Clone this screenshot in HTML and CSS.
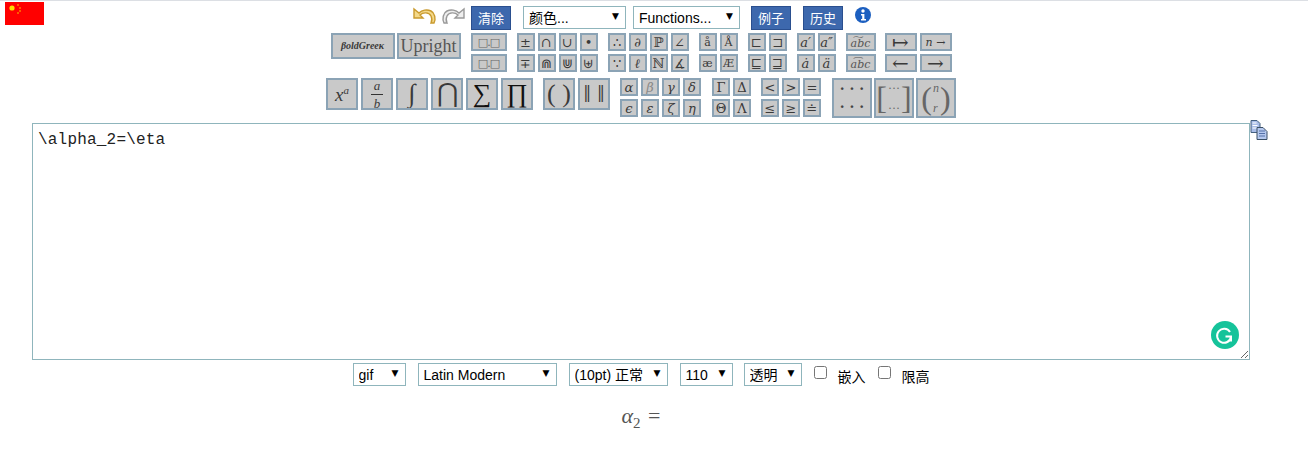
FILE: index.html
```html
<!DOCTYPE html>
<html lang="en">
<head>
    <meta charset="UTF-8">
    <title>Equation Editor</title>
    <link rel="stylesheet" href="styles.css">
</head>
<body>
<div class="page">
    <!-- top bar -->
    <div class="topbar">
        <svg class="flag" viewBox="0 0 39 23">
            <rect width="39" height="23" fill="#f00"/>
            <circle cx="7" cy="6" r="2.6" fill="#fd0"/>
            <circle cx="13" cy="3" r="0.8" fill="#fc0"/>
            <circle cx="15" cy="6" r="0.8" fill="#fc0"/>
            <circle cx="15" cy="9" r="0.8" fill="#fc0"/>
            <circle cx="13" cy="11" r="0.8" fill="#fc0"/>
        </svg>
        <div class="tools">
            <svg class="hist undo" viewBox="0 0 26 18">
                <path d="M3 2v9h9L9 8c3-3 9-3 11 1 1 2 1 5 0 7h3c2-4 1-10-3-12-4-2-9-1-12 2z" fill="#f4d98a" stroke="#c99a2e" stroke-width="1.4"/>
            </svg>
            <svg class="hist redo" viewBox="0 0 26 18">
                <path d="M23 2v9h-9l3-3c-3-3-9-3-11 1-1 2-1 5 0 7H3C1 12 2 6 6 4c4-2 9-1 12 2z" fill="#eee" stroke="#999" stroke-width="1.4"/>
            </svg>
            <button class="blue-btn clear">清除</button>
            <span class="pick pick-color"><select><option>颜色...</option></select></span>
            <span class="pick pick-func"><select><option>Functions...</option></select></span>
            <button class="blue-btn examples">例子</button>
            <button class="blue-btn history">历史</button>
            <svg class="info" viewBox="0 0 16 16">
                <circle cx="8" cy="8" r="8" fill="#1c5fc0"/>
                <circle cx="8" cy="4" r="1.7" fill="#fff"/>
                <path d="M6 7h3.4v5H11v1.6H6V12h1.2V8.6H6z" fill="#fff"/>
            </svg>
        </div>
    </div>

    <!-- symbol panels, first row -->
    <div class="panel row-a">
        <div class="grp wide">
            <span class="sym bold-greek">βoldGreeκ</span>
            <span class="sym upright">Upright</span>
        </div>
        <div class="grp box">
            <span class="sym boxes">□.□</span>
            <span class="sym boxes">□.□</span>
        </div>
        <div class="grp c4">
            <span class="sym">±</span><span class="sym">∩</span><span class="sym">∪</span><span class="sym">•</span>
            <span class="sym">∓</span><span class="sym">⋒</span><span class="sym">⋓</span><span class="sym">⊎</span>
        </div>
        <div class="grp c4">
            <span class="sym">∴</span><span class="sym it">∂</span><span class="sym">ℙ</span><span class="sym">∠</span>
            <span class="sym">∵</span><span class="sym it">ℓ</span><span class="sym">ℕ</span><span class="sym">∡</span>
        </div>
        <div class="grp c2">
            <span class="sym sm">å</span><span class="sym sm">Å</span>
            <span class="sym sm">æ</span><span class="sym sm">Æ</span>
        </div>
        <div class="grp c2">
            <span class="sym">⊏</span><span class="sym">⊐</span>
            <span class="sym">⊑</span><span class="sym">⊒</span>
        </div>
        <div class="grp c2">
            <span class="sym it">a′</span><span class="sym it">a″</span>
            <span class="sym it">ȧ</span><span class="sym it">ä</span>
        </div>
        <div class="grp box-abc">
            <span class="sym it sm abc">a͠bc</span>
            <span class="sym it sm abc">a͡bc</span>
        </div>
        <div class="grp arrows">
            <span class="sym lg">↦</span><span class="sym it sm">n →</span>
            <span class="sym lg">←</span><span class="sym lg">→</span>
        </div>
    </div>

    <!-- symbol panels, second row -->
    <div class="panel row-b">
        <div class="grp big6">
            <span class="sym big"><span class="it xa">x<sup>a</sup></span></span>
            <span class="sym big"><span class="frac it"><span class="num">a</span><span>b</span></span></span>
            <span class="sym big it xl">∫</span>
            <span class="sym big xl">⋂</span>
            <span class="sym big xl dark">∑</span>
            <span class="sym big xl dark">∏</span>
        </div>
        <div class="grp big2">
            <span class="sym big xl">( )</span>
            <span class="sym big xl">‖ ‖</span>
        </div>
        <div class="grp c4 greek">
            <span class="sym it">α</span><span class="sym it pale">β</span><span class="sym it">γ</span><span class="sym it">δ</span>
            <span class="sym it">ϵ</span><span class="sym it">ε</span><span class="sym it">ζ</span><span class="sym it">η</span>
        </div>
        <div class="grp c2">
            <span class="sym">Γ</span><span class="sym">Δ</span>
            <span class="sym">Θ</span><span class="sym">Λ</span>
        </div>
        <div class="grp c3">
            <span class="sym">&lt;</span><span class="sym">&gt;</span><span class="sym">=</span>
            <span class="sym">≤</span><span class="sym">≥</span><span class="sym">≐</span>
        </div>
        <div class="grp matrices">
            <span class="sym matrix"><span>· · ·</span><span>· · ·</span></span>
            <span class="sym matrix bracket">[<span class="dots"><span>···</span><span>···</span></span>]</span>
            <span class="sym matrix bracket">(<span class="dots it"><span>n</span><span>r</span></span>)</span>
        </div>
    </div>

    <!-- editor -->
    <div class="editor">
        <div class="editor-box">
            <textarea class="latex" spellcheck="false">\alpha_2=\eta</textarea>
            <span class="grammarly">
                <svg viewBox="0 0 28 28" width="28" height="28">
                    <path d="M19 11a7 7 0 1 0 1 5M14.500 15.500h5.500v5" fill="none" stroke="#fff" stroke-width="2"/>
                </svg>
            </span>
        </div>
        <svg class="copy" viewBox="0 0 18 20">
            <path d="M1 .5h6l3 3v9H1z" fill="#a9bde8" stroke="#44607f"/>
            <path d="M2.500 3h4M2.500 5.500h5M2.500 8h5" stroke="#fff"/>
            <path d="M7 7.500h6l4 4v8H7z" fill="#b5c8ee" stroke="#3a4f66"/>
            <path d="M9 11h6M9 13.500h6M9 16h6" stroke="#5470a8"/>
        </svg>
    </div>

    <!-- output options -->
    <div class="options">
        <span class="pick pick-gif"><select><option>gif</option></select></span>
        <span class="pick pick-font"><select><option>Latin Modern</option></select></span>
        <span class="pick pick-size"><select><option>(10pt) 正常</option></select></span>
        <span class="pick pick-dpi"><select><option>110</option></select></span>
        <span class="pick pick-bg"><select><option>透明</option></select></span>
        <label class="check"><input type="checkbox"><span>嵌入</span></label>
        <label class="check"><input type="checkbox"><span>限高</span></label>
    </div>

    <div class="preview"><i>α</i><sub>2</sub> <span class="eq">=</span></div>
</div>
</body>
</html>
```

FILE: styles.css
```css
body{
    margin: 0;
    border-top: 1px solid #dcdfe4;
    font-family: "Liberation Sans", "Noto Sans CJK SC", sans-serif;
    font-size: 14px;
    color: #000;
    background: #fff;
}

.page{
    width: 1282px;
    height: 452px;
    overflow: hidden;
}

/* top bar */
.topbar{
    display: grid;
    grid-template-columns: 1fr auto 1fr;
    height: 32px;
}

.flag{
    display: block;
    width: 39px;
    height: 23px;
    margin: 1px 0 0 5px;
}

.tools{
    display: flex;
    align-items: flex-start;
    padding-top: 5px;
}

.hist{
    width: 26px;
    height: 18px;
    margin-top: 1px;
}

.redo{
    margin-left: 4px;
}

.blue-btn{
    width: 40px;
    height: 24px;
    padding: 0;
    border: 1px solid #2a4f8f;
    background: #3d68ad;
    color: #fff;
    font-family: "Noto Sans CJK SC", sans-serif;
    font-size: 13px;
    line-height: 22px;
}

.clear{
    margin: 0 12px 0 4px;
}

.examples{
    margin-left: 11px;
}

.history{
    margin-left: 12px;
}

.info{
    width: 16px;
    height: 16px;
    margin: 1px 0 0 12px;
}

/* selects */
.pick{
    position: relative;
    display: block;
    height: 23px;
}

.pick select{
    display: block;
    width: 100%;
    height: 100%;
    padding: 0 0 0 5px;
    border: 1px solid #8fb5bc;
    border-radius: 0;
    background: #fff;
    color: #000;
    font-family: "Liberation Sans", "Noto Sans CJK SC", sans-serif;
    font-size: 14px;
    appearance: none;
}

.pick::after{
    content: "▼";
    position: absolute;
    top: 5px;
    right: 7px;
    font-family: "DejaVu Sans", sans-serif;
    font-size: 9px;
    line-height: 11px;
    pointer-events: none;
}

.pick-color{ width: 103px; }
.pick-func{ width: 107px; margin-left: 7px; }
.pick-gif{ width: 53px; }
.pick-font{ width: 139px; margin-left: 12px; }
.pick-size{ width: 99px; margin-left: 12px; }
.pick-dpi{ width: 53px; margin-left: 12px; }
.pick-bg{ width: 58px; margin-left: 11px; }

/* symbol panels */
.panel{
    display: flex;
    justify-content: center;
    align-items: flex-start;
    gap: 10px;
}

.row-a{
    height: 45px;
}

.row-b{
    height: 45px;
}

.grp{
    display: grid;
    gap: 3px;
    grid-auto-rows: 18px;
}

.c2{ grid-template-columns: repeat(2, 18px); }
.c3{ grid-template-columns: repeat(3, 18px); }
.c4{ grid-template-columns: repeat(4, 18px); }
.box{ grid-template-columns: 36px; }
.box-abc{ grid-template-columns: 30px; margin-right: -1px; }
.arrows{ grid-template-columns: repeat(2, 32px); }

.wide{
    grid-template-columns: repeat(2, 64px);
    grid-auto-rows: 26px;
    gap: 2px;
}

.big6{
    grid-template-columns: repeat(6, 32px);
    grid-auto-rows: 32px;
}

.big2{
    grid-template-columns: repeat(2, 32px);
    grid-auto-rows: 32px;
}

.greek{ margin-right: 1px; }

.matrices{
    grid-template-columns: repeat(3, 40px);
    grid-auto-rows: 40px;
    gap: 2px;
    margin-left: 1px;
}

.sym{
    display: flex;
    align-items: center;
    justify-content: center;
    overflow: hidden;
    border: 2px solid #8ba3b5;
    background: #c9c9c9;
    color: #3a3a3a;
    font-family: "DejaVu Serif", "Liberation Serif", serif;
    font-size: 13px;
    line-height: 1;
    white-space: nowrap;
}

.it{ font-style: italic; }
.sm{ font-size: 11px; }
.lg{ font-size: 20px; }
.pale{ color: #888; }
.dark{ color: #111; }

.bold-greek{
    font-family: "Liberation Serif", serif;
    font-size: 10px;
    font-style: italic;
    font-weight: bold;
}

.upright{
    font-family: "Liberation Serif", serif;
    font-size: 18px;
    color: #555;
}

.boxes{
    font-size: 11px;
    letter-spacing: -1px;
    color: #666;
}

.abc{
    font-size: 11px;
    color: #555;
    padding-top: 3px;
}

.big{
    font-size: 16px;
}

.xl{
    font-size: 26px;
    font-family: "Liberation Serif", serif;
}

.xa{
    font-size: 19px;
    font-family: "Liberation Serif", serif;
}

.xa sup{
    font-size: 11px;
    line-height: 0;
}

.frac{
    display: flex;
    flex-direction: column;
    align-items: center;
    font-family: "Liberation Serif", serif;
    font-size: 13px;
}

.num{
    border-bottom: 1px solid #333;
    padding: 0 3px 2px;
    margin-bottom: 2px;
}

.matrix{
    flex-direction: column;
    justify-content: space-around;
    color: #444;
    font-size: 14px;
    font-weight: bold;
}

.bracket{
    flex-direction: row;
    justify-content: center;
    font-family: "Liberation Serif", serif;
    font-size: 32px;
    font-weight: normal;
    color: #666;
}

.dots{
    display: flex;
    flex-direction: column;
    gap: 8px;
    font-size: 12px;
    padding: 0 1px;
}

/* editor */
.editor{
    display: flex;
    align-items: flex-start;
    height: 243px;
    padding-left: 32px;
    margin-top: -3px;
}

.editor-box{
    position: relative;
    width: 1218px;
    height: 237px;
    margin-top: 3px;
}

.latex{
    display: block;
    box-sizing: border-box;
    width: 100%;
    height: 100%;
    margin: 0;
    padding: 7px 5px;
    border: 1px solid #8fb5bc;
    outline: none;
    color: #222;
    font-family: "Liberation Mono", monospace;
    font-size: 16px;
    letter-spacing: 0.2px;
    line-height: 18px;
}

.grammarly{
    position: absolute;
    right: 11px;
    bottom: 11px;
    width: 28px;
    height: 28px;
    border-radius: 50%;
    background: #15c39a;
}

.grammarly svg{
    display: block;
}

.copy{
    width: 18px;
    height: 20px;
    margin-left: 0;
}

/* options */
.options{
    display: flex;
    justify-content: center;
    align-items: flex-start;
    height: 40px;
    padding-left: 0;
}

.check{
    display: flex;
    align-items: flex-start;
    margin-left: 12px;
    font-family: "Noto Sans CJK SC", sans-serif;
    font-size: 14px;
}

.check input{
    width: 13px;
    height: 13px;
    margin: 3px 11px 0 0;
}

.check span{
    padding-top: 3px;
    line-height: 20px;
}

.preview{
    text-align: center;
    font-family: "Liberation Serif", serif;
    font-size: 22px;
    color: #555;
}

.preview sub{
    font-size: 15px;
}

.eq{
    margin-left: 2px;
}
```
